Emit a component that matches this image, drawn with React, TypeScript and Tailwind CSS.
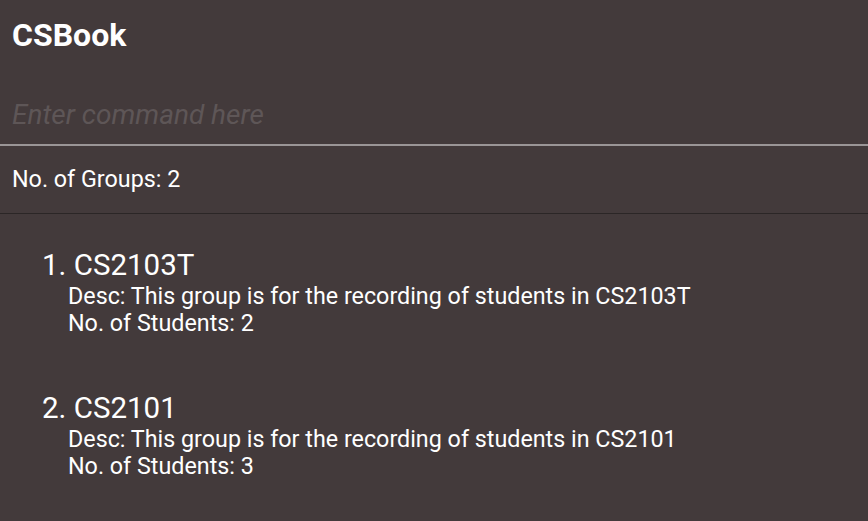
const groups = [
  {
    name: "CS2103T",
    desc: "This group is for the recording of students in CS2103T",
    students: 2,
  },
  {
    name: "CS2101",
    desc: "This group is for the recording of students in CS2101",
    students: 3,
  },
]

export default function App() {
  return (
    <div
      className="w-[868px] h-[521px] bg-[#433a3b] text-white overflow-hidden flex flex-col"
      style={{ fontFamily: "Roboto, 'Noto Sans', sans-serif" }}
    >
      <div className="px-3 pt-[15px] h-[72px]">
        <h1 className="text-[32px] font-bold leading-[40px]">CSBook</h1>
      </div>
      <div className="px-3 h-[74px] flex items-end pb-[12px] border-b-2 border-[#9a9596]">
        <input
          placeholder="Enter command here"
          className="w-full bg-transparent outline-none text-[28px] leading-[34px] italic placeholder:text-[#5e5657] text-white"
        />
      </div>
      <div className="px-3 h-[68px] flex items-center border-b border-[#2b2626] text-[23.3px]">
        No. of Groups: 2
      </div>
      <div className="flex flex-col pl-[42px] pt-[33px] gap-[53px]">
        {groups.map((g, i) => (
          <div key={g.name} className="flex flex-col">
            <div className="text-[29.5px] leading-[36px]">
              {i + 1}. {g.name}
            </div>
            <div className="pl-[26px] text-[23.3px] leading-[27px]">
              <div>Desc: {g.desc}</div>
              <div>No. of Students: {g.students}</div>
            </div>
          </div>
        ))}
      </div>
    </div>
  )
}
